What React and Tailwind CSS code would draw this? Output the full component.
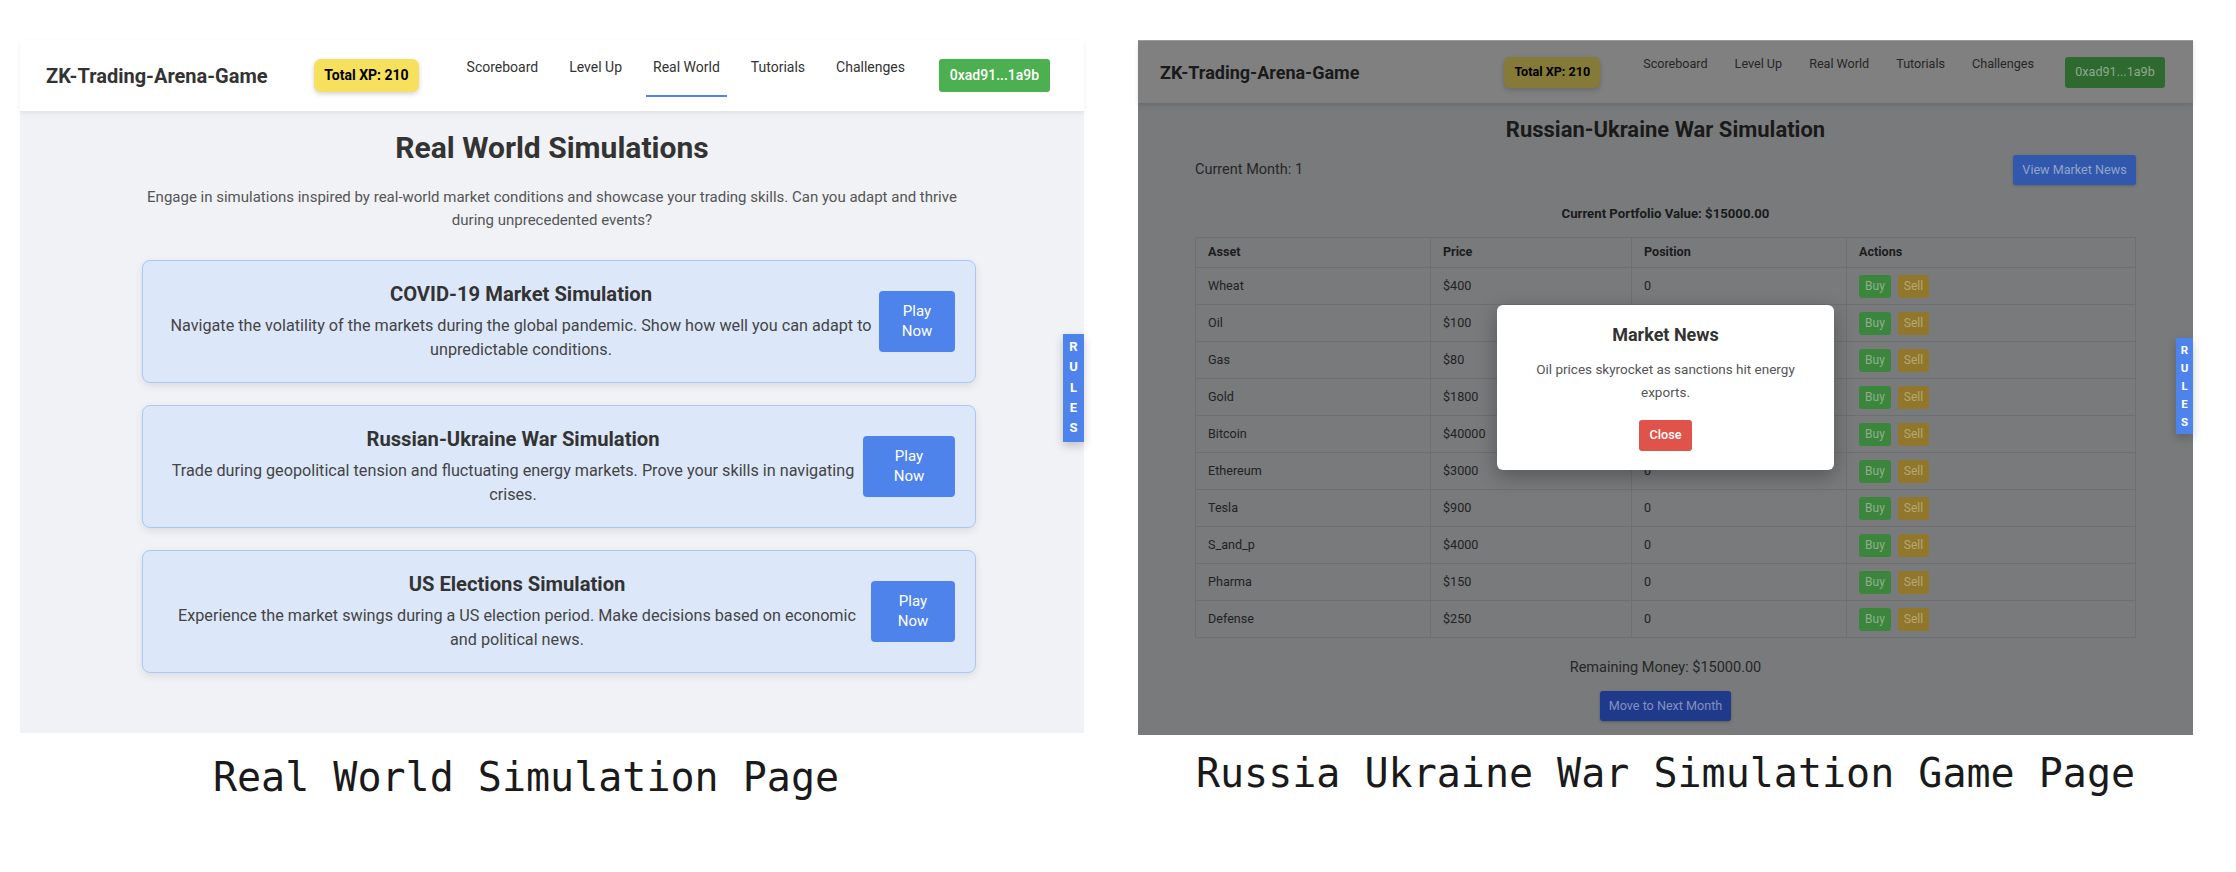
import React from 'react'

const navItems = ['Scoreboard', 'Level Up', 'Real World', 'Tutorials', 'Challenges']

const simulations = [
  {
    title: 'COVID-19 Market Simulation',
    text: 'Navigate the volatility of the markets during the global pandemic. Show how well you can adapt to unpredictable conditions.',
    btn: 'w-[76px]',
  },
  {
    title: 'Russian-Ukraine War Simulation',
    text: 'Trade during geopolitical tension and fluctuating energy markets. Prove your skills in navigating crises.',
    btn: 'w-[92px]',
  },
  {
    title: 'US Elections Simulation',
    text: 'Experience the market swings during a US election period. Make decisions based on economic and political news.',
    btn: 'w-[84px]',
  },
]

const assets = [
  ['Wheat', '$400'],
  ['Oil', '$100'],
  ['Gas', '$80'],
  ['Gold', '$1800'],
  ['Bitcoin', '$40000'],
  ['Ethereum', '$3000'],
  ['Tesla', '$900'],
  ['S_and_p', '$4000'],
  ['Pharma', '$150'],
  ['Defense', '$250'],
]

/* Vertical blue RULES tab pinned to the right edge */
function RulesTab({ className, letterClass }) {
  return (
    <div className={`absolute right-0 flex flex-col items-center bg-[#4f83ec] text-white font-bold shadow-[0_4px_10px_rgba(0,0,0,0.2)] ${className}`}>
      {['R', 'U', 'L', 'E', 'S'].map((l) => (
        <span key={l} className={`block ${letterClass}`}>{l}</span>
      ))}
    </div>
  )
}

function RealWorldPage() {
  return (
    <div className="relative h-[693px] flex flex-col">
      {/* Header */}
      <header className="relative z-10 h-[71px] bg-white flex items-center pl-[26px] pr-[34px] shadow-[0_2px_4px_rgba(0,0,0,0.07)]">
        <span className="text-[20px] font-bold text-[#333]">ZK-Trading-Arena-Game</span>
        <div className="ml-auto flex items-center">
          <span className="h-[33px] px-[10px] flex items-center rounded-[7px] bg-[#f6e05e] text-[14px] font-bold text-black shadow-[0_2px_5px_rgba(0,0,0,0.18)]">
            Total XP: 210
          </span>
          <nav className="ml-[41px] mt-[3px] flex gap-[17px]">
            {navItems.map((item) => (
              <span
                key={item}
                className={`px-[7px] pb-[18px] leading-[20px] text-[14px] text-[#333] border-b-2 ${item === 'Real World' ? 'border-[#4f83ec]' : 'border-transparent'}`}
              >
                {item}
              </span>
            ))}
          </nav>
          <span className="ml-[27px] h-[33px] w-[111px] flex items-center justify-center rounded-[3px] bg-[#4caf50] text-[14px] font-medium text-white">
            0xad91...1a9b
          </span>
        </div>
      </header>

      {/* Body */}
      <main className="flex-1 bg-[#f0f2f5] flex flex-col items-center pt-[19px]">
        <h1 className="text-[30px] leading-[36px] font-bold text-[#333]">Real World Simulations</h1>
        <p className="mt-[20px] w-[850px] text-center text-[15px] leading-[23px] text-[#555]">
          Engage in simulations inspired by real-world market conditions and showcase your trading skills. Can you adapt and thrive during unprecedented events?
        </p>

        <div className="mt-[28px] self-stretch pl-[122px] pr-[108px] flex flex-col gap-[22px]">
          {simulations.map((s) => (
            <div
              key={s.title}
              className="flex items-center px-[20px] pt-[19px] pb-[20px] rounded-[8px] border border-[#abc8f3] bg-[#dce8fa] shadow-[0_3px_8px_rgba(0,0,0,0.09)]"
            >
              <div className="flex-1 text-center">
                <h2 className="text-[20.2px] leading-[28px] font-bold text-[#333]">{s.title}</h2>
                <p className="mt-[6px] text-[16.2px] leading-[24px] text-[#444]">{s.text}</p>
              </div>
              <button className={`${s.btn} shrink-0 h-[61px] flex items-center justify-center rounded-[4px] bg-[#4f83ec] text-white text-[15px] leading-[20px]`}>
                Play<br />Now
              </button>
            </div>
          ))}
        </div>
      </main>

      <RulesTab className="top-[294px] w-[21px] h-[108px] pt-[3px]" letterClass="text-[13px] leading-[20.3px]" />
    </div>
  )
}

function WarGamePage() {
  return (
    <div className="relative h-[695px] flex flex-col border-t border-[#9c9c9c]">
      {/* Header (dimmed) */}
      <header className="relative z-10 h-[62px] bg-[#808080] flex items-center pl-[22px] pr-[28px] shadow-[0_2px_4px_rgba(0,0,0,0.12)]">
        <span className="text-[18px] font-bold text-[#1a1a1a]">ZK-Trading-Arena-Game</span>
        <div className="ml-auto flex items-center">
          <span className="h-[31px] px-[10px] flex items-center rounded-[6px] bg-[#857a38] text-[12.6px] font-bold text-black shadow-[0_2px_5px_rgba(0,0,0,0.2)]">
            Total XP: 210
          </span>
          <nav className="ml-[37px] mt-[2px] flex gap-[15px]">
            {navItems.map((item) => (
              <span key={item} className="px-[6px] pb-[16px] leading-[18px] text-[12.6px] text-[#262626] border-b-2 border-transparent">
                {item}
              </span>
            ))}
          </nav>
          <span className="ml-[25px] h-[31px] w-[100px] flex items-center justify-center rounded-[3px] bg-[#2e6a30] text-[12.6px] text-[#8ea88f]">
            0xad91...1a9b
          </span>
        </div>
      </header>

      {/* Body (dimmed) */}
      <main className="flex-1 bg-[#797a7c] flex flex-col items-center pt-[13px]">
        <h1 className="text-[22px] leading-[28px] font-bold text-[#1a1a1a]">Russian-Ukraine War Simulation</h1>

        <div className="mt-[11px] self-stretch px-[57px] flex items-center justify-between">
          <span className="text-[14.5px] text-[#262626]">Current Month: 1</span>
          <button className="h-[30px] w-[123px] rounded-[3px] bg-[#3158ad] text-[12.6px] text-[#93a4c8] shadow-[0_1px_3px_rgba(0,0,0,0.2)]">
            View Market News
          </button>
        </div>

        <p className="mt-[20px] text-[13.2px] leading-[18px] font-bold text-[#1a1a1a]">Current Portfolio Value: $15000.00</p>

        <table className="mt-[14px] w-[941px] border-collapse text-[12.6px] text-left">
          <thead>
            <tr className="h-[30px]">
              {['Asset', 'Price', 'Position', 'Actions'].map((h, i) => (
                <th
                  key={h}
                  className={`border border-[#6e6f71] px-[12px] font-bold text-[#1c1c1c] ${['w-[235px]', 'w-[201px]', 'w-[215px]', ''][i]}`}
                >
                  {h}
                </th>
              ))}
            </tr>
          </thead>
          <tbody>
            {assets.map(([name, price]) => (
              <tr key={name} className="h-[37px]">
                <td className="border border-[#6e6f71] px-[12px] text-[#222]">{name}</td>
                <td className="border border-[#6e6f71] px-[12px] text-[#222]">{price}</td>
                <td className="border border-[#6e6f71] px-[12px] text-[#222]">0</td>
                <td className="border border-[#6e6f71] px-[12px]">
                  <div className="flex gap-[7px]">
                    <span className="h-[23px] w-[32px] flex items-center justify-center rounded-[3px] bg-[#3b853d] text-[12px] text-[#8fb08f]">Buy</span>
                    <span className="h-[23px] w-[31px] flex items-center justify-center rounded-[3px] bg-[#90772b] text-[12px] text-[#b6a77a]">Sell</span>
                  </div>
                </td>
              </tr>
            ))}
          </tbody>
        </table>

        <p className="mt-[20px] text-[14.5px] leading-[20px] text-[#262626]">Remaining Money: $15000.00</p>
        <button className="mt-[13px] h-[30px] w-[131px] rounded-[3px] bg-[#1f3a8a] text-[12.6px] text-[#8391bd] shadow-[0_1px_3px_rgba(0,0,0,0.25)]">
          Move to Next Month
        </button>
      </main>

      {/* Market news modal, sits over the dimmed page */}
      <div className="absolute left-[359px] top-[264px] w-[337px] h-[165px] rounded-[6px] bg-white shadow-[0_6px_20px_rgba(0,0,0,0.3)] flex flex-col items-center px-[20px] pt-[18px]">
        <h3 className="text-[18px] leading-[24px] font-bold text-[#333]">Market News</h3>
        <p className="mt-[11px] text-center text-[13.5px] leading-[23px] text-[#555]">
          Oil prices skyrocket as sanctions hit energy exports.
        </p>
        <button className="mt-[16px] h-[31px] w-[53px] rounded-[3px] bg-[#e0534b] text-[12.6px] font-medium text-white">Close</button>
      </div>

      <RulesTab className="top-[297px] w-[17px] h-[96px] pt-[3px]" letterClass="text-[11.5px] leading-[18px]" />
    </div>
  )
}

export default function App() {
  return (
    <div className="w-[2236px] h-[872px] bg-white font-[Roboto,sans-serif] flex items-start pt-[40px] pl-[20px] gap-[54px]">
      <div className="w-[1064px] flex flex-col">
        <RealWorldPage />
        <p className="mt-[20px] pr-[52px] text-center font-['DejaVu_Sans_Mono',monospace] text-[40px] leading-[48px] text-[#1a1a1a]">
          Real World Simulation Page
        </p>
      </div>
      <div className="w-[1055px] flex flex-col">
        <WarGamePage />
        <p className="mt-[14px] text-center font-['DejaVu_Sans_Mono',monospace] text-[40px] leading-[48px] text-[#1a1a1a]">
          Russia Ukraine War Simulation Game Page
        </p>
      </div>
    </div>
  )
}
